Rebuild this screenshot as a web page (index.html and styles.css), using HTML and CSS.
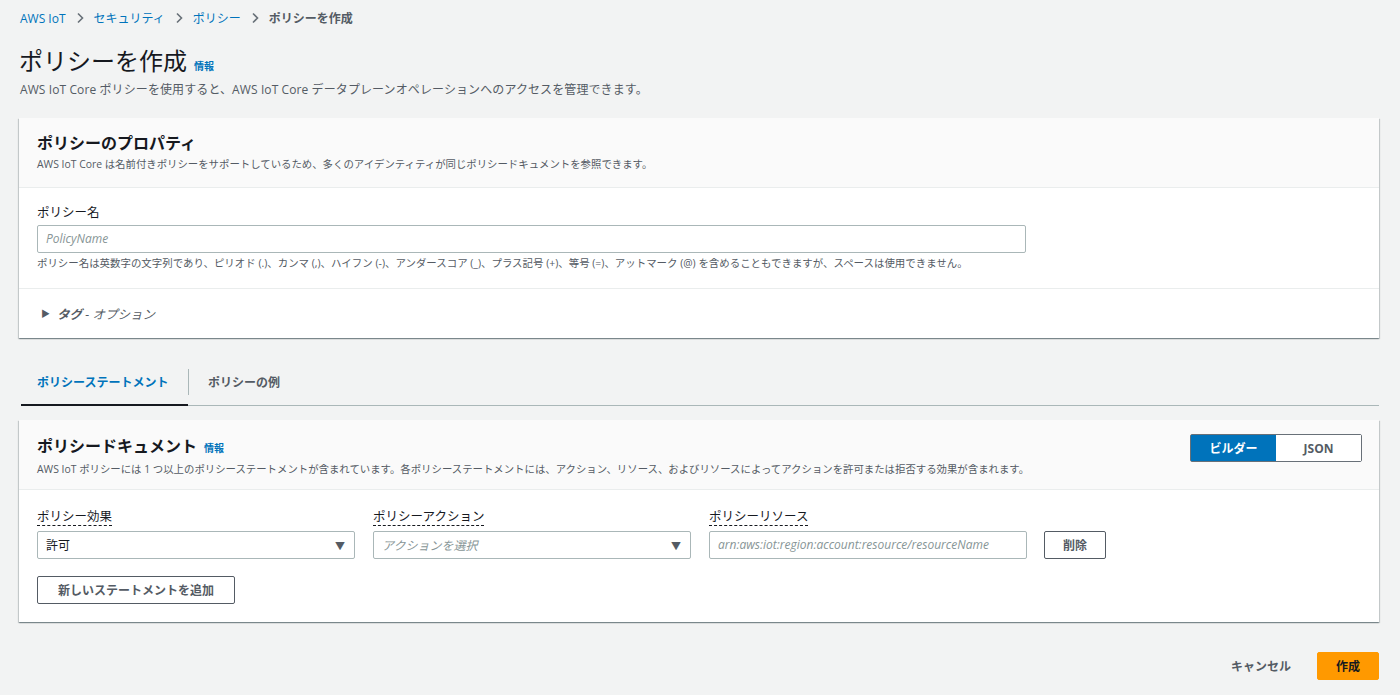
FILE: index.html
```html
<!DOCTYPE html>
<html lang="ja">
<head>
<meta charset="utf-8">
<title>ポリシーを作成</title>
<link rel="stylesheet" href="styles.css">
</head>
<body>
<div class="page">
  <nav class="breadcrumb">
    <a href="#">AWS IoT</a>
    <svg class="chev" width="10" height="12" viewBox="0 0 10 12"><path d="M3 1.5 L7.5 6 L3 10.5" fill="none" stroke="#687078" stroke-width="1.6"/></svg>
    <a href="#">セキュリティ</a>
    <svg class="chev" width="10" height="12" viewBox="0 0 10 12"><path d="M3 1.5 L7.5 6 L3 10.5" fill="none" stroke="#687078" stroke-width="1.6"/></svg>
    <a href="#">ポリシー</a>
    <svg class="chev" width="10" height="12" viewBox="0 0 10 12"><path d="M3 1.5 L7.5 6 L3 10.5" fill="none" stroke="#687078" stroke-width="1.6"/></svg>
    <span class="current">ポリシーを作成</span>
  </nav>

  <header class="page-head">
    <h1>ポリシーを作成 <a class="info" href="#">情報</a></h1>
    <p class="page-desc">AWS IoT Core ポリシーを使用すると、AWS IoT Core データプレーンオペレーションへのアクセスを管理できます。</p>
  </header>

  <section class="panel">
    <div class="panel-head">
      <h2>ポリシーのプロパティ</h2>
      <p class="panel-desc">AWS IoT Core は名前付きポリシーをサポートしているため、多くのアイデンティティが同じポリシードキュメントを参照できます。</p>
    </div>
    <div class="panel-body">
      <label class="field-label">ポリシー名</label>
      <div class="input wide placeholder">PolicyName</div>
      <p class="hint">ポリシー名は英数字の文字列であり、ピリオド (.)、カンマ (,)、ハイフン (-)、アンダースコア (_)、プラス記号 (+)、等号 (=)、アットマーク (@) を含めることもできますが、スペースは使用できません。</p>
    </div>
    <div class="panel-foot">
      <span class="caret">▶</span><strong>タグ</strong><em>&nbsp;- オプション</em>
    </div>
  </section>

  <div class="tabs">
    <div class="tab active">ポリシーステートメント</div>
    <div class="tab-sep"></div>
    <div class="tab">ポリシーの例</div>
  </div>

  <section class="panel doc">
    <div class="panel-head doc-head">
      <div>
        <h2>ポリシードキュメント <a class="info" href="#">情報</a></h2>
        <p class="panel-desc">AWS IoT ポリシーには 1 つ以上のポリシーステートメントが含まれています。各ポリシーステートメントには、アクション、リソース、およびリソースによってアクションを許可または拒否する効果が含まれます。</p>
      </div>
      <div class="segmented">
        <span class="seg on">ビルダー</span>
        <span class="seg">JSON</span>
      </div>
    </div>
    <div class="panel-body stmt">
      <div class="stmt-row">
        <div class="col">
          <span class="dlabel">ポリシー効果</span>
          <div class="select"><span>許可</span><span class="tri">▼</span></div>
        </div>
        <div class="col">
          <span class="dlabel">ポリシーアクション</span>
          <div class="select placeholder"><span>アクションを選択</span><span class="tri">▼</span></div>
        </div>
        <div class="col">
          <span class="dlabel">ポリシーリソース</span>
          <div class="input placeholder">arn:aws:iot:region:account:resource/resourceName</div>
        </div>
        <button class="btn del">削除</button>
      </div>
      <button class="btn add">新しいステートメントを追加</button>
    </div>
  </section>

  <div class="actions">
    <a class="cancel" href="#">キャンセル</a>
    <button class="btn primary">作成</button>
  </div>
</div>
</body>
</html>
```

FILE: styles.css
```css
* { box-sizing: border-box; }
html, body { margin: 0; padding: 0; }
body {
  background: #f2f3f3;
  font-family: "Open Sans", "Noto Sans CJK JP", sans-serif;
  color: #16191f;
  font-size: 13px;
}
.page { padding: 0 21px 0 19px; width: 1400px; }

.breadcrumb {
  display: flex;
  align-items: center;
  gap: 9px;
  height: 36px;
  font-size: 12px;
  padding-left: 1px;
}
.breadcrumb a { color: #0073bb; text-decoration: none; }
.breadcrumb .current { color: #545b64; font-weight: 700; }
.chev { display: block; }

.page-head { padding-top: 10px; }
h1 {
  margin: 0;
  font-size: 24px;
  font-weight: 400;
  line-height: 30px;
  display: flex;
  align-items: baseline;
}
.info {
  color: #0073bb;
  font-size: 10px;
  font-weight: 700;
  text-decoration: none;
  margin-left: 7px;
  letter-spacing: 0;
}
.page-desc {
  margin: 1px 0 0 1px;
  font-size: 12px;
  color: #545b64;
  line-height: 16px;
  letter-spacing: 0.1px;
}

.panel {
  background: #fff;
  margin-top: 20px;
  box-shadow: 0 1px 1px 0 rgba(0,28,36,.3), 1px 1px 1px 0 rgba(0,28,36,.15), -1px 1px 1px 0 rgba(0,28,36,.15);
}
.panel-head {
  background: #fafafa;
  border-bottom: 1px solid #eaeded;
  padding: 15px 18px 15px 18px;
  height: 70px;
}
h2 {
  margin: 0;
  font-size: 16px;
  font-weight: 700;
  line-height: 20px;
  display: flex;
  align-items: baseline;
}
.panel-desc {
  margin: 4px 0 0;
  font-size: 10.4px;
  color: #545b64;
  line-height: 14px;
}
.panel-body { padding: 16px 18px 0; height: 101px; border-bottom: 1px solid #eaeded; }
.field-label { display: block; font-size: 12.5px; line-height: 18px; margin-bottom: 3px; }
.input {
  height: 28px;
  border: 1px solid #aab7b8;
  border-radius: 2px;
  padding: 0 8px;
  font-size: 12px;
  line-height: 26px;
  background: #fff;
}
.input.wide { width: 989px; }
.placeholder { color: #879596; font-style: italic; }
.hint {
  margin: 3px 0 0;
  font-size: 10.45px;
  color: #545b64;
  line-height: 14px;
}
.panel-foot {
  height: 49px;
  padding: 0 18px 0 22px;
  display: flex;
  align-items: center;
  font-size: 12.5px;
  color: #545b64;
}
.panel-foot .caret { font-size: 9px; margin-right: 7px; color: #545b64; }
.panel-foot strong { color: #545b64; font-style: italic; }
.panel-foot em { font-style: italic; }

.tabs {
  margin-top: 27px;
  display: flex;
  align-items: center;
  height: 41px;
  border-bottom: 1px solid #aab7b8;
  margin-left: 2px;
  position: relative;
}
.tab {
  font-size: 12px;
  font-weight: 700;
  color: #545b64;
  padding: 0 16px 7px;
  height: 41px;
  display: flex;
  align-items: center;
}
.tab.active {
  color: #0073bb;
  border-bottom: 2px solid #16191f;
  margin-bottom: -1px;
  width: 167px;
  padding-bottom: 5px;
}
.tab-sep { width: 1px; height: 26px; background: #aab7b8; margin-top: -6px; margin-right: 3px; }

.panel.doc { margin-top: 14px; }
.doc-head { display: flex; justify-content: space-between; padding-top: 16px; padding-right: 17px; }
.segmented { display: flex; height: 28px; border: 1px solid #687078; border-radius: 2px; margin-top: -2px; }
.seg {
  width: 85px;
  display: flex; align-items: center; justify-content: center;
  font-size: 12px; font-weight: 700; color: #545b64;
  background: #fff;
}
.seg.on { background: #0073bb; color: #fff; }

.stmt { height: auto; border-bottom: none; padding: 19px 18px 18px; }
.stmt-row { display: flex; align-items: flex-end; gap: 18px; }
.col { width: 318px; display: flex; flex-direction: column; }
.dlabel {
  font-size: 12.5px;
  line-height: 16px;
  border-bottom: 1px dashed #16191f;
  align-self: flex-start;
  margin-bottom: 5px;
}
.select {
  height: 28px;
  border: 1px solid #aab7b8;
  border-radius: 2px;
  padding: 0 9px 0 8px;
  display: flex; justify-content: space-between; align-items: center;
  font-size: 12px;
}
.select .tri { font-style: normal; color: #545b64; font-size: 10px; }
.btn {
  font-family: inherit;
  background: #fff;
  border: 1px solid #545b64;
  border-radius: 2px;
  font-weight: 700;
  font-size: 12px;
  color: #545b64;
  height: 28px;
  padding: 0 17px;
  cursor: pointer;
}
.btn.del { width: 62px; padding: 0; margin-left: -1px; }
.btn.add { margin-top: 17px; width: 198px; padding: 0; }

.actions {
  display: flex; justify-content: flex-end; align-items: center;
  gap: 26px;
  margin-top: 30px;
}
.cancel { color: #545b64; font-weight: 700; font-size: 12px; text-decoration: none; }
.btn.primary {
  background: #ff9900; border-color: #ff9900; color: #16191f;
  width: 62px; padding: 0;
}
```
